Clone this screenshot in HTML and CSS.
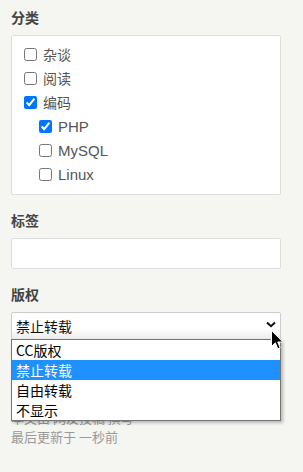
FILE: index.html
```html
<!DOCTYPE html>
<html>
<head>
    <link rel="stylesheet" href="styles.css">
</head>
<body>
    <div class="page">
        <!-- Categories -->
        <section class="field">
            <h3 class="field-title">分类</h3>
            <div class="category-box">
                <label class="cat"><input type="checkbox"><span>杂谈</span></label>
                <label class="cat"><input type="checkbox"><span>阅读</span></label>
                <label class="cat"><input type="checkbox" checked><span>编码</span></label>
                <label class="cat sub"><input type="checkbox" checked><span class="latin">PHP</span></label>
                <label class="cat sub"><input type="checkbox"><span class="latin">MySQL</span></label>
                <label class="cat sub"><input type="checkbox"><span class="latin">Linux</span></label>
            </div>
        </section>

        <!-- Tags -->
        <section class="field">
            <h3 class="field-title">标签</h3>
            <input type="text" class="tag-input">
        </section>

        <!-- Copyright (dropdown open) -->
        <section class="field">
            <h3 class="field-title">版权</h3>
            <div class="select-wrap">
                <div class="select-box">
                    <span>禁止转载</span>
                    <svg class="chevron" width="10" height="7" viewBox="0 0 10 7">
                        <path d="M1 1.5 L5 5.2 L9 1.5" fill="none" stroke="#111" stroke-width="2"/>
                    </svg>
                </div>
                <ul class="select-menu">
                    <li>CC版权</li>
                    <li class="active">禁止转载</li>
                    <li>自由转载</li>
                    <li>不显示</li>
                </ul>
                <svg class="cursor" width="13" height="20" viewBox="0 0 13 20">
                    <path d="M0.5 0.5 L0.5 16.5 L4.3 12.8 L6.8 18.8 L9.2 17.8 L6.7 12 L11.8 12 Z" fill="#000" stroke="#fff" stroke-width="1"/>
                </svg>
            </div>
        </section>

        <div class="meta">
            <p>本文由 网友投稿 撰写</p>
            <p>最后更新于 一秒前</p>
        </div>
    </div>
</body>
</html>
```

FILE: styles.css
```css
  body {
      background-color: #f5f5f1;
      font-family: "Noto Sans CJK SC", "Liberation Sans", sans-serif;
      font-size: 14px;
      color: #333;
      margin: 0;
  }

  .page {
      width: 270px;
      padding: 7px 22px 0 11px;
  }

  .field {
      margin-bottom: 15px;
  }

  .field-title {
      font-size: 14px;
      font-weight: bold;
      color: #444;
      line-height: 20px;
      margin: 0 0 8px 0;
  }

  /* category checkbox list */
  .category-box {
      background-color: #fff;
      border: 1px solid #ddd;
      border-radius: 2px;
      padding: 6px 12px 8px 12px;
  }

  .cat {
      display: flex;
      align-items: center;
      height: 24px;
      color: #555;
  }

  .cat input {
      width: 13px;
      height: 13px;
      margin: 0 6px 0 0;
  }

  .cat.sub {
      padding-left: 15px;
  }

  .latin {
      font-family: "Liberation Sans", sans-serif;
      font-size: 15px;
  }

  .tag-input {
      display: block;
      box-sizing: border-box;
      width: 100%;
      height: 31px;
      background-color: #fff;
      border: 1px solid #ddd;
      border-radius: 2px;
      margin: 0;
  }

  /* fake select with its popup open */
  .select-wrap {
      position: relative;
  }

  .select-box {
      display: flex;
      align-items: center;
      justify-content: space-between;
      box-sizing: border-box;
      height: 28px;
      padding: 0 4px 0 4px;
      border: 1px solid #ccc;
      border-radius: 2px;
      background: linear-gradient(#fff 60%, #ececec);
      color: #111;
  }

  .chevron {
      margin-top: -4px;
  }

  .select-menu {
      position: absolute;
      top: 27px;
      left: 0;
      right: 0;
      margin: 0;
      padding: 0;
      list-style: none;
      background-color: #fff;
      border: 1px solid #767676;
      box-shadow: 2px 2px 3px rgba(0, 0, 0, 0.25);
      z-index: 2;
  }

  .select-menu li {
      height: 20px;
      line-height: 20px;
      padding-left: 4px;
      color: #000;
  }

  .select-menu li.active {
      background-color: #1e90ff;
      color: #fff;
  }

  .cursor {
      position: absolute;
      left: 260px;
      top: 18px;
      z-index: 3;
  }

  .meta {
      margin-top: 68px;
      color: #999;
      font-size: 13px;
  }

  .meta p {
      margin: 0;
      line-height: 19px;
  }
```
